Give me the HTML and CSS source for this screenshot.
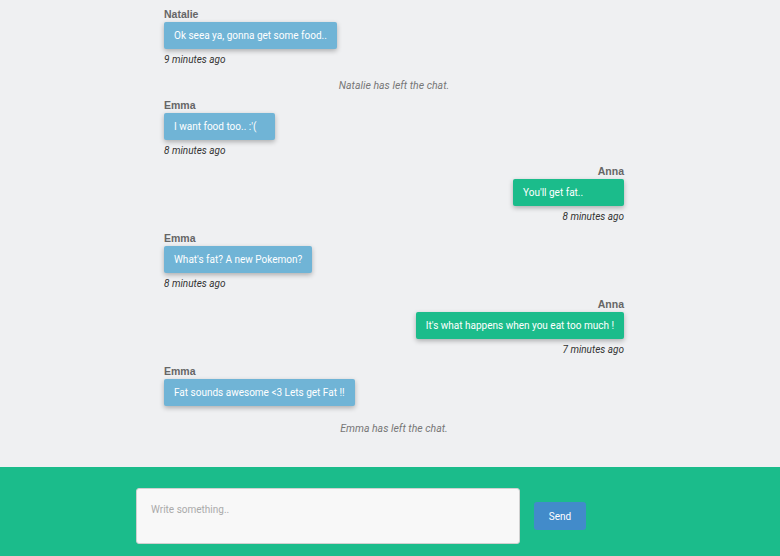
FILE: index.html
```html
<!DOCTYPE html>
<html lang="en">
<head>
<meta charset="utf-8">
<title>Chat</title>
<link rel="stylesheet" href="styles.css">
</head>
<body>
<div class="page">
  <main class="chat">
    <div class="msg">
      <div class="name">Natalie</div>
      <div class="bubble">Ok seea ya, gonna get some food..</div>
      <div class="time">9 minutes ago</div>
    </div>
    <div class="notice">Natalie has left the chat.</div>
    <div class="msg">
      <div class="name">Emma</div>
      <div class="bubble">I want food too.. :'(</div>
      <div class="time">8 minutes ago</div>
    </div>
    <div class="msg mine">
      <div class="name">Anna</div>
      <div class="bubble">You'll get fat..</div>
      <div class="time">8 minutes ago</div>
    </div>
    <div class="msg">
      <div class="name">Emma</div>
      <div class="bubble">What's fat? A new Pokemon?</div>
      <div class="time">8 minutes ago</div>
    </div>
    <div class="msg mine">
      <div class="name">Anna</div>
      <div class="bubble">It's what happens when you eat too much !</div>
      <div class="time">7 minutes ago</div>
    </div>
    <div class="msg last">
      <div class="name">Emma</div>
      <div class="bubble">Fat sounds awesome &lt;3 Lets get Fat !!</div>
    </div>
    <div class="notice">Emma has left the chat.</div>
  </main>
  <footer class="composer">
    <textarea class="input" placeholder="Write something.."></textarea>
    <button class="send" type="button">Send</button>
  </footer>
</div>
</body>
</html>
```
FILE: styles.css
```css
* { box-sizing: border-box; }
html, body { margin: 0; height: 100%; }
body {
  background: #eff0f2;
  font-family: Roboto, "Liberation Sans", Arial, sans-serif;
}
.page {
  height: 100vh;
  display: flex;
  flex-direction: column;
}
.chat {
  flex: 1;
  width: 468px;
  margin: 0 auto;
  padding: 7px 0 0 8px;
  display: flex;
  flex-direction: column;
  align-items: stretch;
}
.msg {
  display: flex;
  flex-direction: column;
  align-items: flex-start;
  margin-bottom: 7.5px;
}
.msg.mine { align-items: flex-end; }
.msg.last { margin-bottom: 11px; }
.name {
  font-family: "Liberation Sans", Arial, sans-serif;
  font-weight: bold;
  font-size: 10.5px;
  line-height: 14px;
  color: #666;
  margin-bottom: 1px;
}
.bubble {
  background: #70b4d6;
  color: #fff;
  font-size: 10px;
  line-height: 11px;
  padding: 8px 10px;
  height: 27px;
  min-width: 111px;
  border-radius: 2px;
  box-shadow: 0 2px 5px rgba(0, 0, 0, 0.28);
}
.mine .bubble { background: #1bbc8b; }
.time {
  font-style: italic;
  font-size: 10px;
  line-height: 12px;
  color: #333;
  margin-top: 5px;
}
.notice {
  text-align: center;
  font-style: italic;
  font-size: 10.5px;
  line-height: 14px;
  color: #777;
  margin: 5.5px 0 4.5px;
}
.composer {
  background: #1bbc8b;
  height: 89px;
  flex-shrink: 0;
  display: flex;
  align-items: center;
  padding: 9px 0 0 136px;
  gap: 14px;
}
.input {
  width: 384px;
  height: 56px;
  background: #f8f8f8;
  border: 1px solid #d0d0d0;
  border-radius: 3px;
  padding: 15px 14px 10px;
  font-family: Roboto, "Liberation Sans", Arial, sans-serif;
  font-size: 10px;
  resize: none;
  outline: none;
}
.input::placeholder { color: #aaa; }
.send {
  width: 52px;
  height: 28px;
  border: none;
  border-radius: 3px;
  background: #428bca;
  color: #fff;
  font-family: Roboto, "Liberation Sans", Arial, sans-serif;
  font-size: 10px;
  padding: 0;
}
```
